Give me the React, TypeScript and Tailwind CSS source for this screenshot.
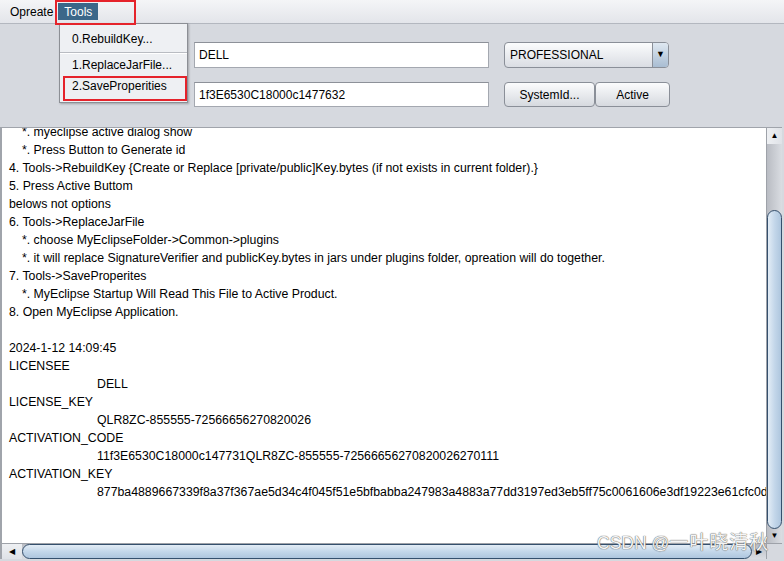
import React from 'react';

const lines: { text: string; indent?: number }[] = [
    { text: '*. myeclipse active dialog show', indent: 13 },
    { text: '*. Press Button to Generate id', indent: 13 },
    { text: '4. Tools->RebuildKey {Create or Replace [private/public]Key.bytes (if not exists in current folder).}' },
    { text: '5. Press Active Buttom' },
    { text: 'belows not options' },
    { text: '6. Tools->ReplaceJarFile' },
    { text: '*. choose MyEclipseFolder->Common->plugins', indent: 13 },
    { text: '*. it will replace SignatureVerifier and publicKey.bytes in jars under plugins folder, opreation will do together.', indent: 13 },
    { text: '7. Tools->SaveProperites' },
    { text: '*. MyEclipse Startup Will Read This File to Active Product.', indent: 13 },
    { text: '8. Open MyEclipse Application.' },
    { text: '' },
    { text: '2024-1-12 14:09:45' },
    { text: 'LICENSEE' },
    { text: 'DELL', indent: 88 },
    { text: 'LICENSE_KEY' },
    { text: 'QLR8ZC-855555-72566656270820026', indent: 88 },
    { text: 'ACTIVATION_CODE' },
    { text: '11f3E6530C18000c147731QLR8ZC-855555-72566656270820026270111', indent: 88 },
    { text: 'ACTIVATION_KEY' },
    { text: '877ba4889667339f8a37f367ae5d34c4f045f51e5bfbabba247983a4883a77dd3197ed3eb5ff75c0061606e3df19223e61cfc0d', indent: 88 },
];

const font = { fontFamily: '"Liberation Sans", Arial, sans-serif' };

export default function App() {
    return (
        <div className="w-[784px] h-[561px] overflow-hidden flex flex-col bg-[#d6d9df] text-[12px] text-black relative" style={font}>
            {/* Menu bar */}
            <div className="h-[24px] flex items-stretch bg-gradient-to-b from-[#f4f5f7] to-[#e3e5ea] border-b border-[#b3b7bf] relative z-20">
                <div className="pl-[10px] pr-[5px] flex items-center">Opreate</div>
                <div className="my-[3px] px-[6px] flex items-center bg-[#3b6789] text-white">Tools</div>
            </div>

            {/* Tools popup menu */}
            <div className="absolute left-[59px] top-[23px] w-[129px] z-30 bg-[#eef0f3] border border-[#8c8f95] pt-[3px] pb-[6px] shadow-[1px_1px_2px_rgba(0,0,0,0.25)]">
                <div className="h-[24px] pl-[12px] flex items-center">0.RebuildKey...</div>
                <div className="h-[2px] mt-[1px] border-t border-[#b9bcc2] bg-white" />
                <div className="h-[21px] pl-[12px] flex items-center">1.ReplaceJarFile...</div>
                <div className="h-[21px] pl-[12px] flex items-center">2.SaveProperities</div>
            </div>

            {/* Red highlight boxes */}
            <div className="absolute left-[55px] top-0 w-[81px] h-[25px] border-2 border-[#e5232b] z-40" />
            <div className="absolute left-[63px] top-[76px] w-[124px] h-[25px] border-2 border-[#e5232b] z-40" />

            {/* Top form */}
            <div className="h-[103px] pl-[194px] pt-[18px] flex flex-col gap-[14px]">
                <div className="flex gap-[15px]">
                    <div className="w-[295px] h-[26px] bg-white border border-[#a4a8b0] border-t-[#8d9199] pl-[4px] flex items-center">DELL</div>
                    <div className="w-[165px] h-[26px] flex rounded-[4px] border border-[#8a8f98] bg-gradient-to-b from-[#fbfcfd] to-[#dadde3] overflow-hidden">
                        <div className="flex-1 pl-[5px] flex items-center">PROFESSIONAL</div>
                        <div className="w-[16px] flex items-center justify-center border-l border-[#8a8f98] bg-gradient-to-b from-[#dfe8f1] to-[#a9bdd2] text-[9px]">▼</div>
                    </div>
                </div>
                <div className="flex gap-[15px]">
                    <div className="w-[295px] h-[25px] bg-white border border-[#a4a8b0] border-t-[#8d9199] pl-[4px] flex items-center">1f3E6530C18000c1477632</div>
                    <div className="flex">
                        <div className="w-[91px] h-[25px] flex items-center justify-center rounded-[4px] border border-[#8a8f98] bg-gradient-to-b from-[#fbfcfd] to-[#d6d9df]">SystemId...</div>
                        <div className="w-[75px] h-[25px] flex items-center justify-center rounded-[4px] border border-[#8a8f98] bg-gradient-to-b from-[#fbfcfd] to-[#d6d9df]">Active</div>
                    </div>
                </div>
            </div>

            {/* Text area with scrollbars */}
            <div className="h-[432px] flex flex-col border-t border-l-2 border-[#a0a4ab] mr-[2px]">
                <div className="flex-1 flex min-h-0">
                    <div className="flex-1 bg-white overflow-hidden min-w-0">
                        <div className="mt-[-5px] pl-[7px] leading-[18px] whitespace-nowrap text-[12.3px]">
                            {lines.map((l, i) => (
                                <div key={i} className="h-[18px]" style={{ paddingLeft: l.indent ?? 0 }}>
                                    {l.text}
                                </div>
                            ))}
                        </div>
                    </div>
                    {/* Vertical scrollbar */}
                    <div className="w-[16px] flex flex-col bg-gradient-to-r from-[#b9bcc3] to-[#dadde2] border-l border-[#9ea2a9]">
                        <div className="h-[16px] flex items-center justify-center bg-gradient-to-r from-[#eef0f3] to-[#dfe2e7] text-[8px]">▲</div>
                        <div className="h-[66px]" />
                        <div className="flex-1 rounded-[8px] border border-[#35506d] bg-gradient-to-r from-[#e3edf6] via-[#c4d7ea] to-[#aec6de]" />
                        <div className="h-[14px] flex items-center justify-center text-[8px]">▼</div>
                    </div>
                </div>
                {/* Horizontal scrollbar */}
                <div className="h-[16px] flex bg-gradient-to-b from-[#b9bcc3] to-[#dadde2] border-t border-[#9ea2a9]">
                    <div className="w-[20px] flex items-center justify-center bg-gradient-to-b from-[#eef0f3] to-[#dfe2e7] text-[8px]">◀</div>
                    <div className="w-[730px] rounded-[8px] border border-[#35506d] bg-gradient-to-b from-[#e3edf6] via-[#c4d7ea] to-[#aec6de]" />
                    <div className="flex-1 flex items-center justify-center text-[8px]">▶</div>
                    <div className="w-[16px] bg-[#d6d9df] border-l border-[#9ea2a9]" />
                </div>
            </div>

            {/* Watermark */}
            <div
                className="absolute left-[597px] top-[529px] flex items-baseline text-[#f4f4f4] z-50 [text-shadow:0_0_1px_#5f5f5f,0_0_1px_#5f5f5f]"
                style={{ fontFamily: '"Liberation Sans", "Noto Sans CJK SC", sans-serif' }}
            >
                <span className="text-[17.5px]">CSDN @</span>
                <span className="text-[19px] tracking-[1px]">一叶晓清秋</span>
            </div>
        </div>
    );
}
